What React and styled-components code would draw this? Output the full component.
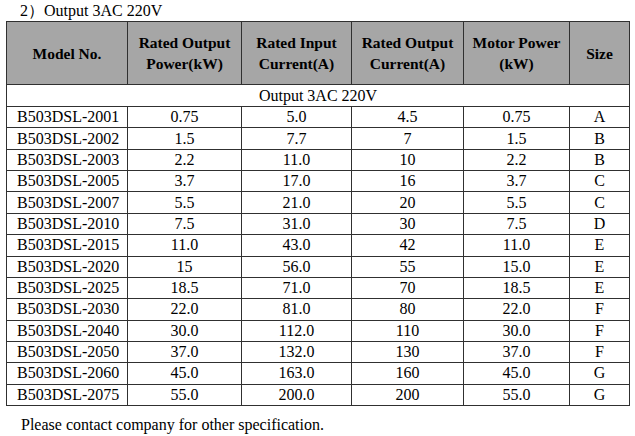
import styled, { createGlobalStyle } from "styled-components";

const serif = `"Liberation Serif", "Times New Roman", "DejaVu Serif", serif`;

const GlobalStyle = createGlobalStyle`
  html, body {
    margin: 0;
    background: #ffffff;
    color: #000000;
    font-family: ${serif};
  }
  table, th, td {
    font-family: ${serif};
    color: #000000;
  }
`;

const Page = styled.div`
  width: 635px;
  height: 436px;
  padding: 0 0 0 6px;
  box-sizing: border-box;
  overflow: hidden;
  font-family: ${serif};
`;

const Caption = styled.div`
  font-family: ${serif};
  font-size: 16px;
  line-height: 21px;
  height: 21px;
  padding-left: 14px;
`;

const Table = styled.table`
  border-collapse: collapse;
  table-layout: fixed;
  width: 623px;
  border: 1.5px solid #1e1e1e;
  font-family: ${serif};
  font-size: 16px;
`;

const HeadCell = styled.th`
  background: #a6a6a6;
  border: 1px solid #303030;
  font-family: ${serif};
  font-weight: bold;
  font-size: 15.5px;
  line-height: 21px;
  height: 62px;
  padding: 0 2px;
  text-align: center;
  vertical-align: middle;
`;

const GroupCell = styled.td`
  border: 1px solid #303030;
  font-family: ${serif};
  font-size: 16px;
  height: 21px;
  padding: 0;
  line-height: 21px;
  text-align: center;
`;

const Cell = styled.td`
  border: 1px solid #303030;
  font-family: ${serif};
  font-size: 16px;
  height: 20.36px;
  padding: 0;
  padding-left: ${({ $left }) => ($left ? "10px" : "0")};
  line-height: 20px;
  text-align: ${({ $left }) => ($left ? "left" : "center")};
  white-space: nowrap;
`;

const Note = styled.div`
  font-family: ${serif};
  font-size: 16px;
  line-height: 20px;
  padding: 9px 0 0 15px;
`;

const widths = [121, 114, 110, 112, 106, 60];

const headers = [
  ["Model No."],
  ["Rated Output", "Power(kW)"],
  ["Rated Input", "Current(A)"],
  ["Rated Output", "Current(A)"],
  ["Motor Power", "(kW)"],
  ["Size"],
];

const rows = [
  ["B503DSL-2001", "0.75", "5.0", "4.5", "0.75", "A"],
  ["B503DSL-2002", "1.5", "7.7", "7", "1.5", "B"],
  ["B503DSL-2003", "2.2", "11.0", "10", "2.2", "B"],
  ["B503DSL-2005", "3.7", "17.0", "16", "3.7", "C"],
  ["B503DSL-2007", "5.5", "21.0", "20", "5.5", "C"],
  ["B503DSL-2010", "7.5", "31.0", "30", "7.5", "D"],
  ["B503DSL-2015", "11.0", "43.0", "42", "11.0", "E"],
  ["B503DSL-2020", "15", "56.0", "55", "15.0", "E"],
  ["B503DSL-2025", "18.5", "71.0", "70", "18.5", "E"],
  ["B503DSL-2030", "22.0", "81.0", "80", "22.0", "F"],
  ["B503DSL-2040", "30.0", "112.0", "110", "30.0", "F"],
  ["B503DSL-2050", "37.0", "132.0", "130", "37.0", "F"],
  ["B503DSL-2060", "45.0", "163.0", "160", "45.0", "G"],
  ["B503DSL-2075", "55.0", "200.0", "200", "55.0", "G"],
];

export default function App() {
  return (
    <Page>
      <GlobalStyle />
      <Caption>2）Output 3AC 220V</Caption>
      <Table>
        <colgroup>
          {widths.map((w, i) => (
            <col key={i} style={{ width: w }} />
          ))}
        </colgroup>
        <thead>
          <tr>
            {headers.map((lines, i) => (
              <HeadCell key={i}>
                {lines.map((l, j) => (
                  <div key={j}>{l}</div>
                ))}
              </HeadCell>
            ))}
          </tr>
        </thead>
        <tbody>
          <tr>
            <GroupCell colSpan={6}>Output 3AC 220V</GroupCell>
          </tr>
          {rows.map((row) => (
            <tr key={row[0]}>
              {row.map((v, i) => (
                <Cell key={i} $left={i === 0}>
                  {v}
                </Cell>
              ))}
            </tr>
          ))}
        </tbody>
      </Table>
      <Note>Please contact company for other specification.</Note>
    </Page>
  );
}
